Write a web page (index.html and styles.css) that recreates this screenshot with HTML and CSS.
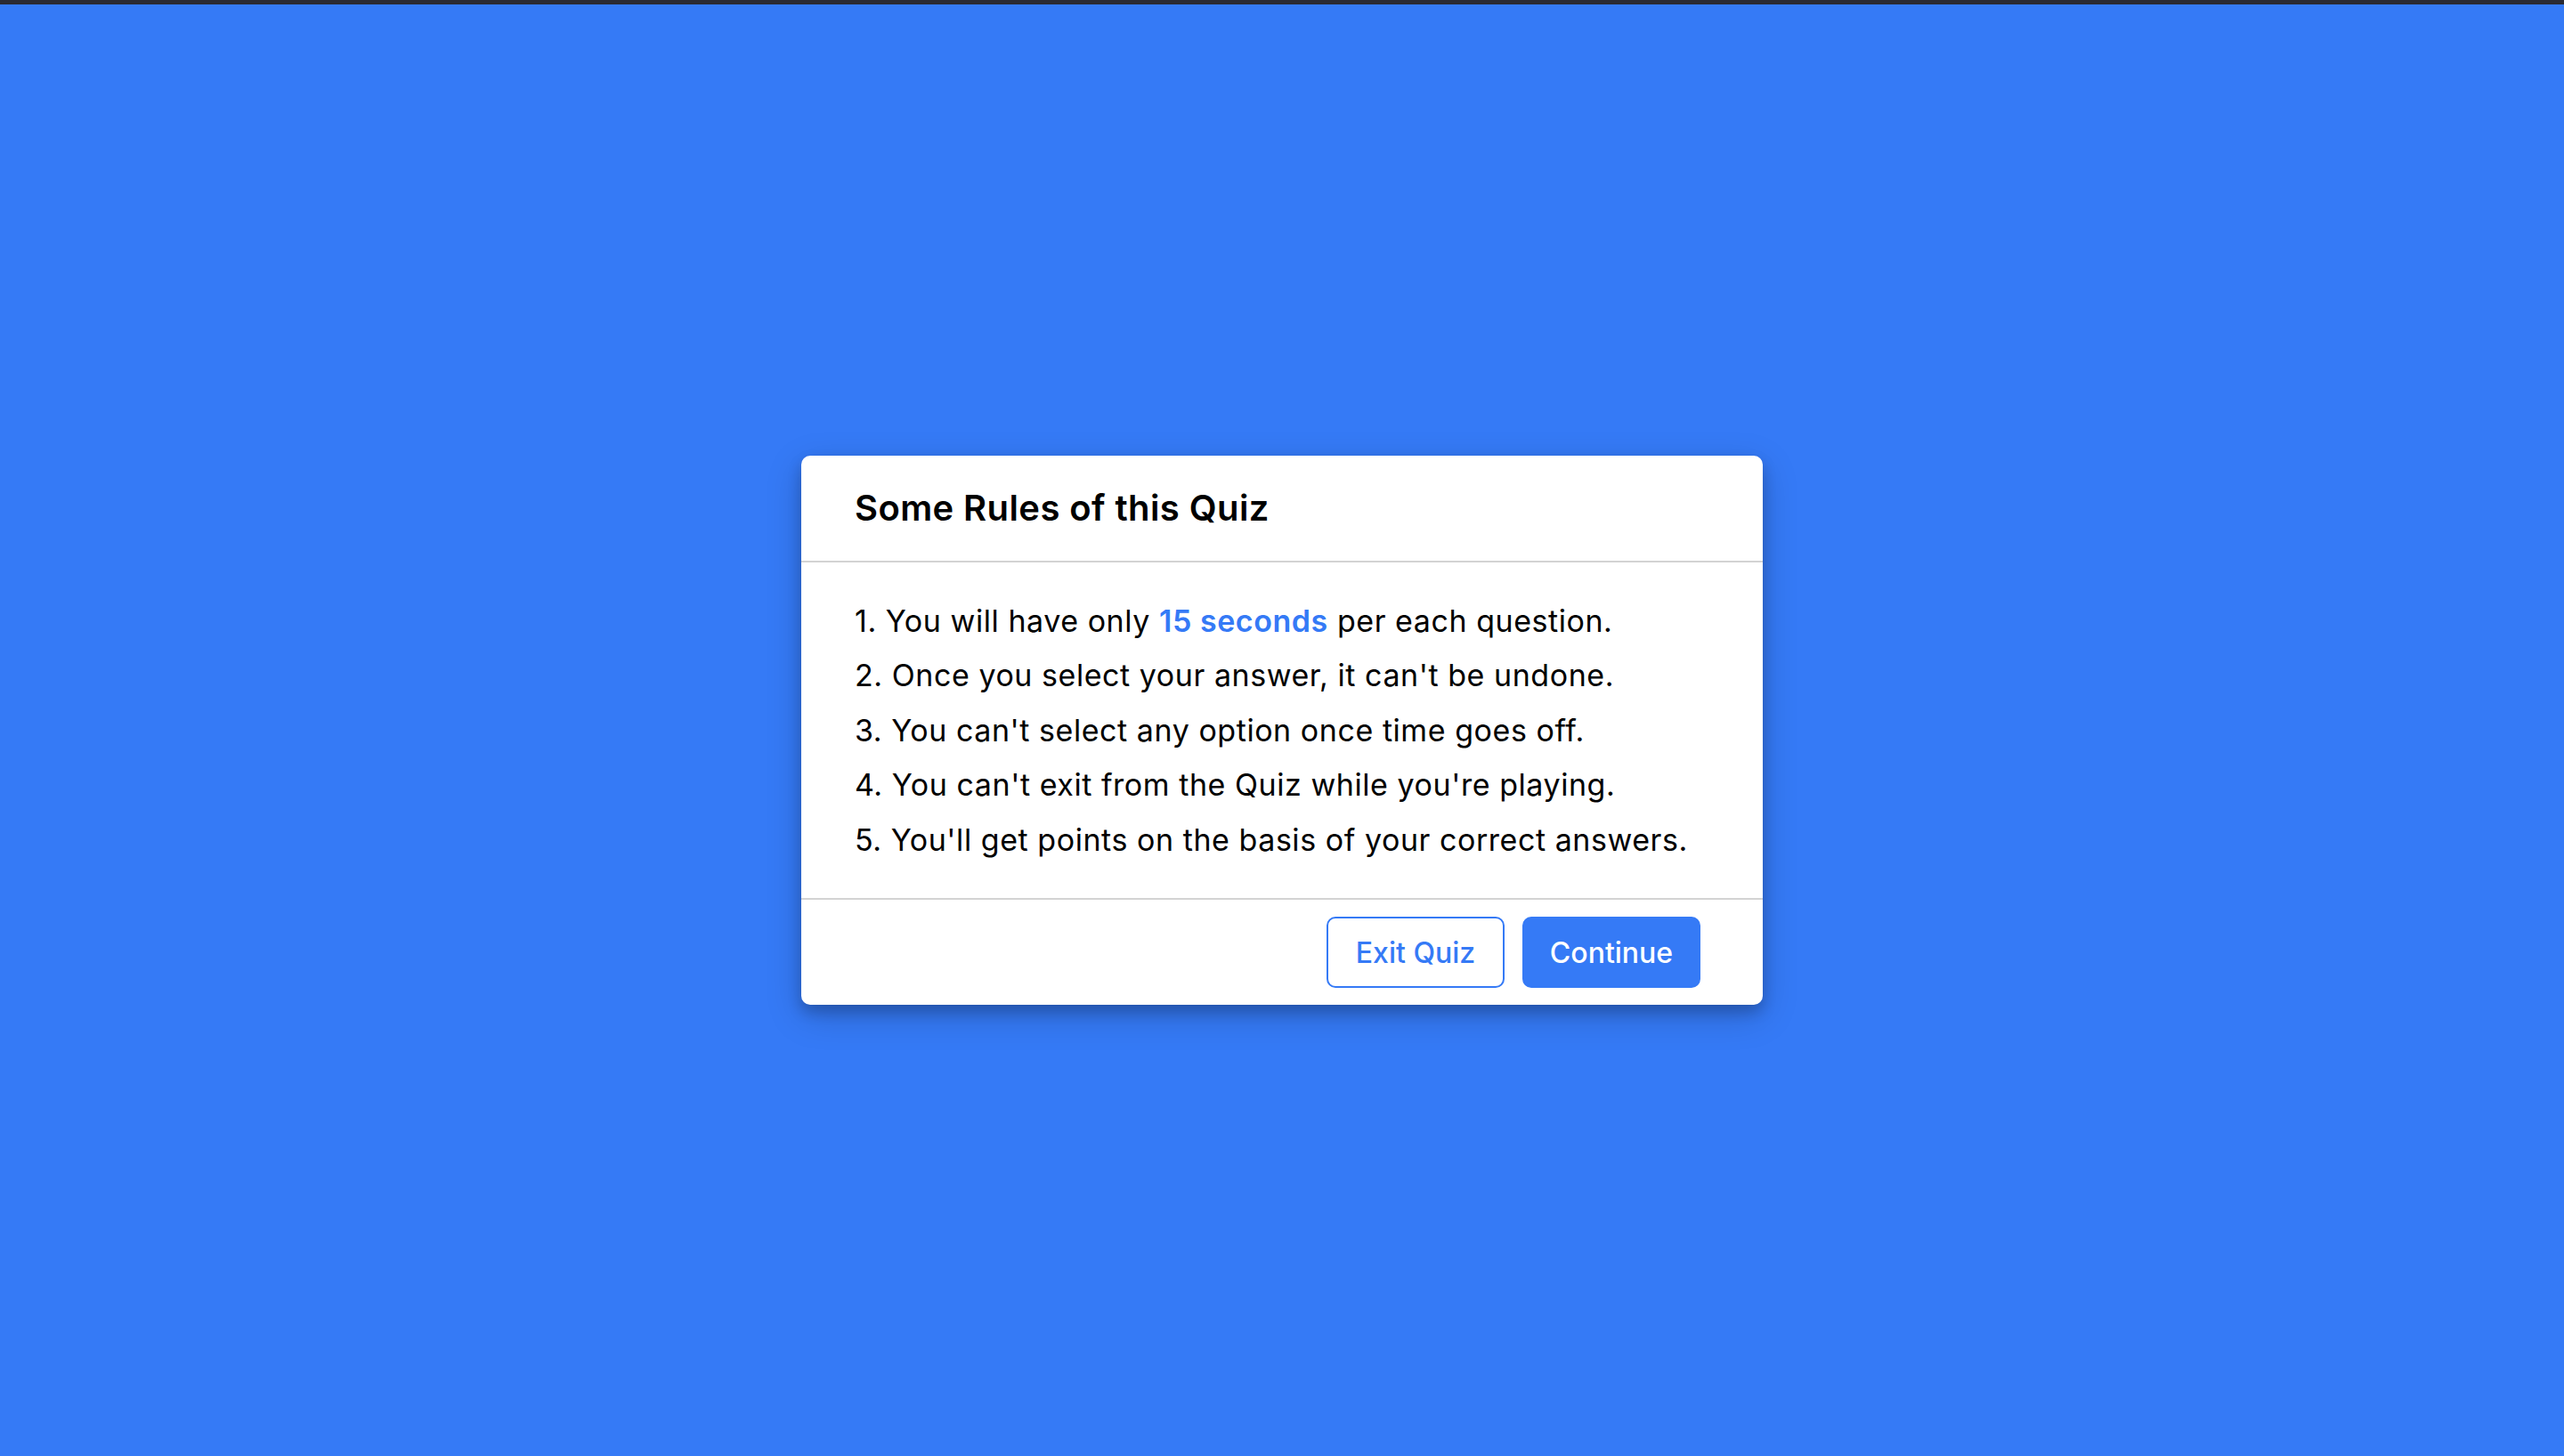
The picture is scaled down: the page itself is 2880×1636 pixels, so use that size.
FILE: index.html
```html
<!DOCTYPE html>
<html lang="en">
<head>
<meta charset="utf-8">
<title>Quiz Rules</title>
<link rel="stylesheet" href="styles.css">
</head>
<body>
<div class="topbar"></div>
<main class="stage">
  <section class="info-box">
    <div class="info-title">Some Rules of this Quiz</div>
    <div class="info-list">
      <div class="info">1. You will have only <span>15 seconds</span> per each question.</div>
      <div class="info">2. Once you select your answer, it can't be undone.</div>
      <div class="info">3. You can't select any option once time goes off.</div>
      <div class="info">4. You can't exit from the Quiz while you're playing.</div>
      <div class="info">5. You'll get points on the basis of your correct answers.</div>
    </div>
    <div class="buttons">
      <button class="btn quit">Exit Quiz</button>
      <button class="btn restart">Continue</button>
    </div>
  </section>
</main>
</body>
</html>
```
FILE: styles.css
```css
* { box-sizing: border-box; margin: 0; padding: 0; }
html, body { height: 100%; }
body {
  background: #357af6;
  font-family: "Inter", "Noto Sans", sans-serif;
  display: flex;
  flex-direction: column;
  overflow: hidden;
}
.topbar { height: 5px; background: #2a2a33; flex: none; }
.stage {
  flex: 1;
  display: flex;
  align-items: center;
  justify-content: center;
}
.info-box {
  width: 1080px;
  background: #fff;
  border-radius: 10px;
  box-shadow: 0 8px 16px 0 rgba(0,0,0,0.2), 0 12px 40px 0 rgba(0,0,0,0.19);
}
.info-title {
  height: 120px;
  border-bottom: 2px solid #d3d3d3;
  display: flex;
  align-items: center;
  padding: 0 60px;
  font-size: 40px;
  font-weight: 600;
  letter-spacing: 0.4px;
  color: #000;
}
.info-list { padding: 30px 60px; }
.info {
  margin: 10px 0;
  font-size: 34px;
  line-height: 51.4px;
  letter-spacing: 0.55px;
  color: #000;
}
.info span { font-weight: 600; color: #357af6; }
.buttons {
  height: 120px;
  display: flex;
  align-items: center;
  justify-content: flex-end;
  padding: 0 60px;
  border-top: 2px solid #d3d3d3;
}
.btn {
  margin: 0 10px;
  height: 80px;
  width: 200px;
  font-family: inherit;
  font-size: 32px;
  font-weight: 500;
  border-radius: 10px;
  border: 2px solid #357af6;
}
.btn.quit { background: #fff; color: #357af6; }
.btn.restart { background: #357af6; color: #fff; }
```
